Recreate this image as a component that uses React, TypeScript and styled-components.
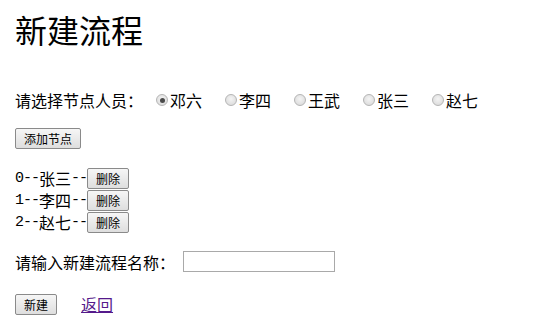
import { useState } from "react";
import styled, { createGlobalStyle } from "styled-components";

const GlobalStyle = createGlobalStyle`
  html, body {
    margin: 0;
    padding: 0;
    background: #ffffff;
  }
  body {
    font-family: "Noto Sans CJK SC", "Liberation Serif", serif;
    color: #000000;
  }
`;

const people = ["邓六", "李四", "王武", "张三", "赵七"];

const nodes = ["张三", "李四", "赵七"];

function App() {
  const [picked, setPicked] = useState("邓六");
  const [name, setName] = useState("");

  return (
    <Page>
      <GlobalStyle />
      <Title>新建流程</Title>

      <PickRow>
        <Label>请选择节点人员：</Label>
        <RadioGroup>
          {people.map((p) => (
            <RadioItem key={p}>
              <Radio
                type="radio"
                name="person"
                checked={picked === p}
                onChange={() => setPicked(p)}
              />
              {p}
            </RadioItem>
          ))}
        </RadioGroup>
      </PickRow>

      <AddRow>
        <Button type="button">添加节点</Button>
      </AddRow>

      <NodeList>
        {nodes.map((n, i) => (
          <NodeRow key={n}>
            <Half>{i}--</Half>
            {n}
            <Half>--</Half>
            <Button type="button">删除</Button>
          </NodeRow>
        ))}
      </NodeList>

      <NameRow>
        <Label>请输入新建流程名称：</Label>
        <NameInput value={name} onChange={(e) => setName(e.target.value)} />
      </NameRow>

      <ActionRow>
        <Button type="button">新建</Button>
        <BackLink href="#">返回</BackLink>
      </ActionRow>
    </Page>
  );
}

export default App;

const Page = styled.div`
  padding: 16px 15px 0;
  font-size: 16px;
`;

const Title = styled.h1`
  margin: 0;
  font-family: "Liberation Serif", "Noto Sans CJK SC", serif;
  font-size: 32px;
  line-height: 32px;
  font-weight: normal;
`;

const PickRow = styled.div`
  display: flex;
  align-items: center;
  margin-top: 42px;
  height: 20px;
  line-height: 20px;
`;

const Label = styled.span`
  white-space: nowrap;
`;

const RadioGroup = styled.div`
  display: flex;
  gap: 23px;
  margin-left: 13px;
`;

const RadioItem = styled.label`
  display: flex;
  align-items: center;
  gap: 2px;
`;

const Radio = styled.input`
  appearance: none;
  margin: 0;
  width: 12px;
  height: 12px;
  border-radius: 50%;
  border: 1px solid #b5b5b5;
  background: radial-gradient(circle at 50% 40%, #f4f4f4 0%, #d6d6d6 100%);
  display: grid;
  place-items: center;

  &:checked::after {
    content: "";
    width: 5px;
    height: 5px;
    border-radius: 50%;
    background: #4a4a4a;
  }
`;

const Button = styled.button`
  height: 21px;
  margin: 0;
  padding: 0 8px;
  font-family: "Noto Sans CJK SC", sans-serif;
  font-size: 12px;
  line-height: 19px;
  color: #000000;
  border: 1px solid #8a8a8a;
  border-radius: 2px;
  background: linear-gradient(#f6f6f6, #dedede);
`;

const AddRow = styled.div`
  margin-top: 18px;
  display: flex;
`;

const NodeList = styled.div`
  margin-top: 18px;
  display: flex;
  flex-direction: column;
`;

const NodeRow = styled.div`
  display: flex;
  align-items: center;
  height: 22px;
`;

const Half = styled.span`
  font-family: "Liberation Mono", monospace;
  font-size: 15px;
  letter-spacing: -1px;
`;

const NameRow = styled.div`
  display: flex;
  align-items: center;
  gap: 8px;
  margin-top: 18px;
  height: 21px;
`;

const NameInput = styled.input`
  box-sizing: border-box;
  width: 152px;
  height: 21px;
  margin: 0;
  padding: 0 3px;
  border: 1px solid #a9a9a9;
  font-size: 13px;
  outline: none;
`;

const ActionRow = styled.div`
  display: flex;
  align-items: center;
  gap: 24px;
  margin-top: 20px;
`;

const BackLink = styled.a`
  color: #551a8b;
  text-decoration: underline;
`;
